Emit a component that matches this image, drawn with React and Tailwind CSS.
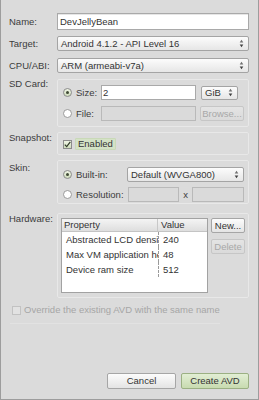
import React from "react";

const Arrows = () => (
  <svg width="5" height="9" viewBox="0 0 5 9" className="shrink-0">
    <path d="M2.5 0.8 L4.3 3.4 L0.7 3.4 Z" fill="#707070" />
    <path d="M0.7 5.6 L4.3 5.6 L2.5 8.2 Z" fill="#404040" />
  </svg>
);

const Select = ({ text, className }) => (
  <div
    className={`flex items-center justify-between border border-[#a4a4a4] rounded-[2px] bg-gradient-to-b from-[#fcfcfc] to-[#e6e6e6] pl-[3px] pr-[4px] text-[#333] ${className}`}
  >
    <span className="whitespace-nowrap">{text}</span>
    <Arrows />
  </div>
);

const Radio = ({ checked }) =>
  checked ? (
    <span className="w-[9px] h-[9px] rounded-full border border-[#8c8c8c] bg-gradient-to-b from-[#eef4e4] to-[#cfdcbc] flex items-center justify-center shrink-0">
      <span className="w-[3px] h-[3px] rounded-full bg-[#3f4a34]" />
    </span>
  ) : (
    <span className="w-[9px] h-[9px] rounded-full border border-[#9a9a9a] bg-white shrink-0" />
  );

const Btn = ({ children, className, disabled }) => (
  <div
    className={
      disabled
        ? `flex items-center justify-center border border-[#c6c6c6] rounded-[2px] bg-gradient-to-b from-[#e4e4e4] to-[#dadada] text-[#a8a8a8] ${className}`
        : `flex items-center justify-center border border-[#a6a6a6] rounded-[2px] bg-gradient-to-b from-[#fcfcfc] to-[#e4e4e4] text-[#333] ${className}`
    }
  >
    {children}
  </div>
);

export default function App() {
  return (
    <div className="w-[259px] h-[400px] bg-[#dbdbdb] border-x border-b border-[#9d9d9d] font-['Liberation_Sans',Arial,sans-serif] text-[9.5px] leading-none text-[#3b3b3b] flex flex-col pl-[8px] pr-[9px] pt-[13px] pb-[10px] overflow-hidden">
      {/* Name */}
      <div className="flex items-center h-[17px]">
        <div className="w-[48px]">Name:</div>
        <div className="flex-1 h-full bg-white border border-[#a9a9a9] shadow-[inset_0_1px_0_#e6e6e6] flex items-center pl-[2px] text-[#333]">
          DevJellyBean
        </div>
      </div>

      {/* Target */}
      <div className="flex items-center h-[15px] mt-[6px]">
        <div className="w-[48px]">Target:</div>
        <Select text="Android 4.1.2 - API Level 16" className="flex-1 h-full" />
      </div>

      {/* CPU */}
      <div className="flex items-center h-[15px] mt-[7px]">
        <div className="w-[48px]">CPU/ABI:</div>
        <Select text="ARM (armeabi-v7a)" className="flex-1 h-full" />
      </div>

      {/* SD Card */}
      <div className="flex mt-[6px]">
        <div className="w-[48px]">SD Card:</div>
        <div className="flex-1 border border-[#e8e8e8] rounded-[2px] pl-[5px] pt-[5px] pb-[5px] flex flex-col">
          <div className="flex items-center h-[15px]">
            <Radio checked />
            <div className="w-[25px] ml-[4px]">Size:</div>
            <div className="w-[95px] h-[15px] bg-white border border-[#a9a9a9] flex items-center pl-[1px] text-[#333]">2</div>
            <Select text="GiB" className="w-[37px] h-[14px] ml-[5px] pl-[2px]" />
          </div>
          <div className="flex items-center h-[15px] mt-[6px]">
            <Radio />
            <div className="w-[25px] ml-[4px]">File:</div>
            <div className="w-[95px] h-[15px] bg-[#dadada] border border-[#b9b9b9]" />
            <Btn disabled className="w-[44px] h-[15px] ml-[4px]">Browse...</Btn>
          </div>
        </div>
      </div>

      {/* Snapshot */}
      <div className="flex mt-[5px]">
        <div className="w-[48px] pt-[1px]">Snapshot:</div>
        <div className="flex-1 h-[23px] border border-[#e8e8e8] rounded-[2px] pl-[5px] pt-[1px] flex items-center">
          <span className="w-[9px] h-[9px] border border-[#8c8c8c] bg-gradient-to-b from-[#eef4e4] to-[#cfdcbc] flex items-center justify-center shrink-0">
            <svg width="7" height="7" viewBox="0 0 7 7">
              <path d="M0.8 3.6 L2.7 5.6 L6.3 0.9" stroke="#2f3a28" strokeWidth="1.2" fill="none" />
            </svg>
          </span>
          <span className="ml-[3px] h-[12px] px-[2px] flex items-center bg-[#d4e2c6] border border-[#c9d9b8] rounded-[1px] text-[#333]">
            Enabled
          </span>
        </div>
      </div>

      {/* Skin */}
      <div className="flex mt-[5px]">
        <div className="w-[48px] pt-[3px]">Skin:</div>
        <div className="flex-1 border border-[#e8e8e8] rounded-[2px] pl-[5px] pt-[6px] pb-[1px] flex flex-col">
          <div className="flex items-center h-[15px]">
            <Radio checked />
            <div className="w-[51px] ml-[4px]">Built-in:</div>
            <Select text="Default (WVGA800)" className="w-[117px] h-[15px]" />
          </div>
          <div className="flex items-center h-[15px] mt-[5px]">
            <Radio />
            <div className="w-[52px] ml-[4px]">Resolution:</div>
            <div className="w-[51px] h-[15px] bg-[#dadada] border border-[#b9b9b9]" />
            <div className="w-[13px] text-center">x</div>
            <div className="w-[52px] h-[15px] bg-[#dadada] border border-[#b9b9b9]" />
          </div>
        </div>
      </div>

      {/* Hardware */}
      <div className="flex mt-[9px]">
        <div className="w-[48px] pt-[1px]">Hardware:</div>
        <div className="flex-1 h-[85px] border border-[#e8e8e8] rounded-[2px] pl-[3px] pt-[4px] flex">
          <div className="w-[147px] h-[75px] border border-[#a2a2a2] bg-white flex flex-col text-[#333]">
            <div className="flex h-[13px] bg-gradient-to-b from-[#f4f4f4] to-[#dedede] border-b border-[#c4c4c4]">
              <div className="w-[96px] pl-[2px] flex items-center border-r border-[#c8c8c8]">Property</div>
              <div className="flex-1 pl-[3px] flex items-center">Value</div>
            </div>
            {[
              ["Abstracted LCD density", "240"],
              ["Max VM application heap size", "48"],
              ["Device ram size", "512"],
            ].map(([k, v]) => (
              <div key={k} className="flex h-[15px]">
                <div className="w-[96px] pl-[4px] flex items-center overflow-hidden whitespace-nowrap">{k}</div>
                <div className="flex-1 pl-[4px] flex items-center border-l border-dashed border-[#9a9a9a]">{v}</div>
              </div>
            ))}
          </div>
          <div className="flex flex-col ml-[3px]">
            <Btn className="w-[34px] h-[15px]">New...</Btn>
            <Btn disabled className="w-[34px] h-[15px] mt-[6px]">Delete</Btn>
          </div>
        </div>
      </div>

      {/* Override */}
      <div className="flex items-center h-[12px] mt-[6px] ml-[3px]">
        <span className="w-[9px] h-[9px] border border-[#c2c2c2] bg-[#e2e2e2] shrink-0" />
        <span className="ml-[3px] text-[#a6a6a6] whitespace-nowrap">Override the existing AVD with the same name</span>
      </div>
      <div className="mt-[7px] ml-[1px] w-[210px] border-t border-[#e2e2e2]" />

      {/* Buttons */}
      <div className="mt-auto flex justify-end">
        <Btn className="w-[69px] h-[16px]">Cancel</Btn>
        <div className="w-[68px] h-[16px] ml-[5px] flex items-center justify-center border border-[#9bb083] rounded-[2px] bg-gradient-to-b from-[#e2eed4] to-[#c8dbb0] text-[#333]">
          Create AVD
        </div>
      </div>
    </div>
  );
}
